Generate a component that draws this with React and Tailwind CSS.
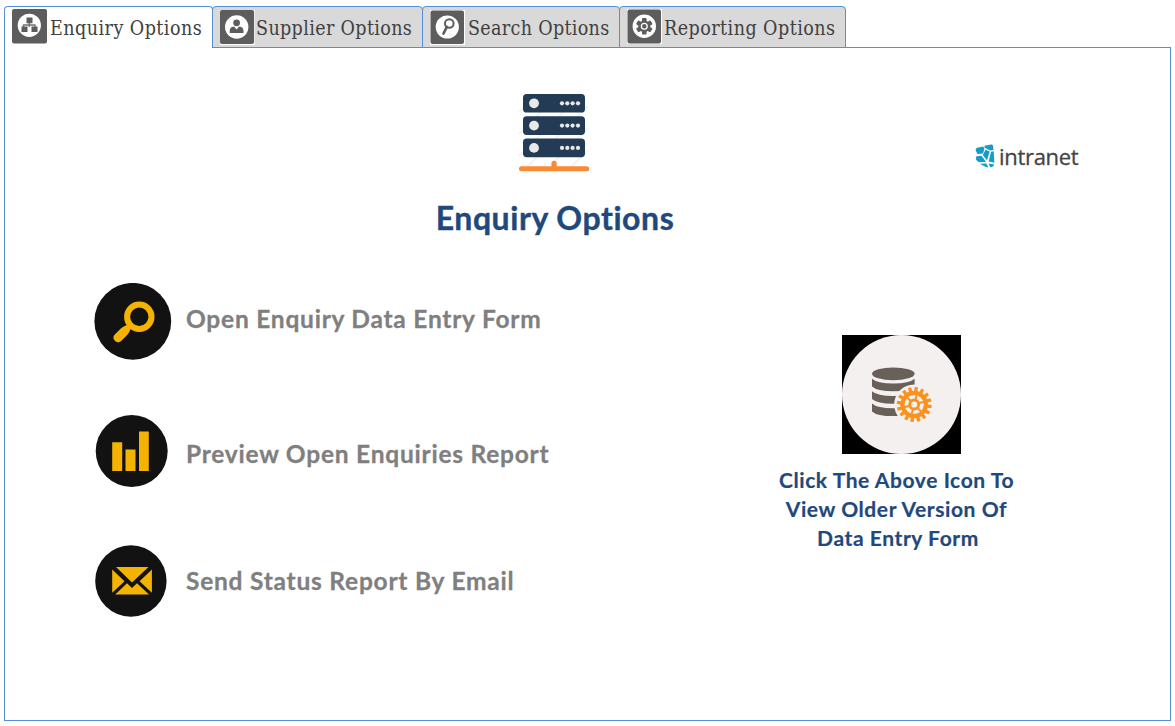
import React from 'react';

const OrgIcon = () => (
  <svg className="block h-[35px] w-[35px]" viewBox="0 0 35 35">
    <rect width="35" height="34.500" rx="2" fill="#5d5d5d" />
    <circle cx="17.300" cy="16.300" r="11.600" fill="#fff" />
    <path d="M17.300 13v5M11.500 20v-4h11.500v4" stroke="#707070" strokeWidth="1.300" fill="none" />
    <path d="M14.500 8.500h6v5.700h-6zM9.500 17.500h6v5.500h-6zM19.500 17.500h6v5.500h-6z" fill="#5d5d5d" />
  </svg>
);

const PersonIcon = () => (
  <svg className="block h-[35px] w-[35px]" viewBox="0 0 35 35">
    <rect width="34.500" height="35" fill="#fff" />
    <rect width="34" height="34" rx="2" fill="#5d5d5d" />
    <circle cx="16.700" cy="17" r="11.700" fill="#fff" />
    <circle cx="16.600" cy="12.800" r="3.400" fill="#5d5d5d" />
    <path d="M9.700 23v-2.200q.3-3.300 3-4l1.400-.4 2.500 3.200 2.500-3.200 1.400.4q2.700.7 3 4V23z" fill="#5d5d5d" />
  </svg>
);

const SearchIcon = () => (
  <svg className="block h-[35px] w-[35px]" viewBox="0 0 35 35">
    <rect width="35" height="35" fill="#fff" />
    <rect x=".5" y=".5" width="33.500" height="33.500" rx="2" fill="#5d5d5d" />
    <circle cx="17.300" cy="17" r="11.600" fill="#fff" />
    <circle cx="19.300" cy="13.500" r="4.300" fill="none" stroke="#5d5d5d" strokeWidth="2" />
    <path d="M16.800 17l-3.300 6.500" stroke="#5d5d5d" strokeWidth="2.700" strokeLinecap="round" />
  </svg>
);

const GearIcon = () => (
  <svg className="block h-[35px] w-[35px]" viewBox="0 0 35 35">
    <rect width="35" height="35" fill="#fff" />
    <rect x=".5" y=".5" width="33.500" height="34" rx="2" fill="#5d5d5d" />
    <circle cx="17.300" cy="17.300" r="11.700" fill="#fff" />
    {[0, 60, 120].map((a) => (
      <rect key={a} x="15" y="9" width="4.600" height="16.600" rx="1" fill="#5d5d5d" transform={`rotate(${a} 17.300 17.300)`} />
    ))}
    <circle cx="17.300" cy="17.300" r="5.900" fill="#5d5d5d" />
    <circle cx="17.300" cy="17.300" r="2.900" fill="none" stroke="#fff" strokeWidth="1.300" />
  </svg>
);

const ServerIcon = () => (
  <svg className="block h-[80px] w-[74px]" viewBox="518 93 74 80">
    <g stroke="#f3f3f3" strokeWidth="2">
      <path d="M519 112l18-18M519 134l40-40M519 156l62-62M524 170l64-64M546 170l42-42M568 170l20-20" />
    </g>
    {[94, 116.300, 138.600].map((y) => (
      <g key={y}>
        <rect x="523" y={y} width="62" height="18.600" rx="3.700" fill="#243b55" />
        <circle cx="534" cy={y + 9.300} r="4.900" fill="#e9e9e9" />
        {[562, 567.300, 572.600, 578].map((x) => (
          <circle key={x} cx={x} cy={y + 9.300} r="2.100" fill="#e9e9e9" />
        ))}
      </g>
    ))}
    <path d="M551.500 166.200v-2.700q0-2.700 2.600-2.700t2.600 2.700v2.700h30q2.500 0 2.500 2.500t-2.500 2.500h-65.200q-2.500 0-2.500-2.500t2.500-2.500z" fill="#fa8a35" />
  </svg>
);

const IntranetMark = () => (
  <svg className="block h-[25px] w-[21px]" viewBox="975 144 21 25">
    <path d="M984.500 145.800l6.500-1.300q2-.3 2.200 2l.3 3.500-3.500.6-5.500-3zM983 146.500l1.500 2-1.500 5-5.500.6-1.800-3.600q-.5-2 1.500-2.800zM976.500 156.300l5-.6 4.500 6-7 .6-2.800-2.400q-.7-1.500.3-3.600zM979.800 163.800l6.500-.4 2 3.600q-1.500.5-3-.3zM991 151.800l2.700-.6.700 11.600-5.700-1.200zM988.600 163.600l5.600 1q-.2 1.700-2 2.200l-2 .5z" fill="#159cc8" />
    <path d="M985.500 149.700l4.200 1.900-2.700 8.800-4.200-5.500z" fill="#159cc8" />
  </svg>
);

const MagnifierAction = () => (
  <svg className="block h-[78px] w-[78px]" viewBox="94 283 78 78">
    <circle cx="132.800" cy="321.300" r="38.400" fill="#121212" />
    <circle cx="139.300" cy="316.700" r="12.200" fill="none" stroke="#f5b301" strokeWidth="6" />
    <path d="M129.200 324.500l2 2q-1 5.800-5.300 9.800l-5 5q-3 2.200-5.800-.3-3-3-.8-6l5-5q4-4.500 9.900-5.500z" fill="#f5b301" />
  </svg>
);

const ChartAction = () => (
  <svg className="block h-[74px] w-[78px]" viewBox="94 414 78 74">
    <circle cx="131.700" cy="451.100" r="36" fill="#121212" />
    <path d="M112.200 442.200h10v28.800h-10zM125.500 449.500h10V471h-10zM139 431.500h9.800V471H139z" fill="#f5b301" />
  </svg>
);

const MailAction = () => (
  <svg className="block h-[74px] w-[78px]" viewBox="94 544 78 74">
    <circle cx="130.900" cy="581" r="35.700" fill="#121212" />
    <path d="M116 567h32.500l-16.500 15.500zM112.200 569.500l12.300 11.700-12.300 11.600zM151.900 569.500v23.300l-12.300-11.600zM127 583.300l5 4.700 5-4.700L149 594.500h-33.800z" fill="#f5b301" />
  </svg>
);

const DatabaseIcon = () => (
  <svg className="block h-[119px] w-[119px]" viewBox="842 335 119 119">
    <rect x="842" y="335" width="119" height="119" fill="#000" />
    <circle cx="901.500" cy="394.500" r="59.500" fill="#f4f0ef" />
    <ellipse cx="893.300" cy="373.800" rx="21.300" ry="6.400" fill="#696059" />
    {[378.800, 391.200, 403.600].map((y) => (
      <path key={y} d={`M872 ${y}q5 4.700 21.300 4.700t21.300-4.700v7.800q-5 4.700-21.300 4.700t-21.300-4.700z`} fill="#696059" />
    ))}
    <circle cx="914.200" cy="404.500" r="20" fill="#f4f0ef" />
    {Array.from({ length: 16 }, (_, i) => (
      <rect key={i} x="912.500" y="387" width="3.400" height="6" fill="#fb921f" transform={`rotate(${i * 22.5 + 7} 914.200 404.500)`} />
    ))}
    <circle cx="914.200" cy="404.500" r="11.700" fill="none" stroke="#fb921f" strokeWidth="4.200" />
    <circle cx="914.200" cy="404.500" r="4.500" fill="none" stroke="#fb921f" strokeWidth="2.800" />
    {[15, 75, 135, 195, 255, 315].map((a) => (
      <path key={a} d="M914.200 400v-6" stroke="#fb921f" strokeWidth="2" transform={`rotate(${a} 914.200 404.500)`} />
    ))}
  </svg>
);

const tabs = [
  { label: 'Enquiry Options', Icon: OrgIcon, box: 'w-[209px] bg-white pl-[7px] pt-[2px] h-[42px] border-b-0 z-10', text: 'ml-[3px] mt-[2px] tracking-[0.46px]' },
  { label: 'Supplier Options', Icon: PersonIcon, box: 'w-[211px] bg-[#d9d9d9] pl-[7px] pt-[3px] h-[42px] -ml-px', text: 'ml-[1px] mt-[1px] tracking-[0.36px]' },
  { label: 'Search Options', Icon: SearchIcon, box: 'w-[198px] bg-[#d9d9d9] pl-[7px] pt-[3px] h-[42px] -ml-px', text: 'ml-[3px] mt-[1px] tracking-[0.32px]' },
  { label: 'Reporting Options', Icon: GearIcon, box: 'w-[227px] bg-[#d9d9d9] pl-[7px] pt-[2px] h-[42px] -ml-px', text: 'ml-[2px] mt-[2px] tracking-[0.46px]' },
];

const actions = [
  { label: 'Open Enquiry Data Entry Form', Icon: MagnifierAction, row: '', text: '-mt-[6px] tracking-[0.77px]' },
  { label: 'Preview Open Enquiries Report', Icon: ChartAction, row: 'mt-[53px]', text: 'mt-[6px] tracking-[0.77px]' },
  { label: 'Send Status Report By Email', Icon: MailAction, row: 'mt-[56px]', text: 'tracking-[0.77px]' },
];

export default function App() {
  return (
    <div className="h-[726px] w-[1175px] overflow-hidden bg-white pl-1 pt-[6px] font-['Lato',sans-serif]">
      <nav className="flex">
        {tabs.map(({ label, Icon, box, text }) => (
          <button key={label} className={`relative flex shrink-0 items-start rounded-t-[4px] border border-[#5590d5] ${box}`}>
            <Icon />
            <span className={`whitespace-nowrap font-['DejaVu_Serif_Condensed','DejaVu_Serif',serif] text-[19.5px] leading-[35px] text-[#404040] [font-stretch:condensed] ${text}`}>
              {label}
            </span>
          </button>
        ))}
      </nav>
      <main className="-mt-px h-[674px] w-[1167px] border border-[#5590d5]">
        <header className="grid grid-cols-[400px_300px_1fr]">
          <div />
          <div className="flex flex-col items-center pt-[45px]">
            <ServerIcon />
            <h1 className="mt-[25px] -mb-px whitespace-nowrap text-[32px] leading-[40px] font-bold tracking-[0.55px] text-[#1f497d] [-webkit-text-stroke:0.4px_#1f497d]">Enquiry Options</h1>
          </div>
          <div className="flex items-start pl-[270px] pt-[96px]">
            <IntranetMark />
            <span className="ml-[3px] font-['Open_Sans',sans-serif] text-[22px] leading-[25px] tracking-[-0.3px] text-[#444] [-webkit-text-stroke:0.3px_#444]">intranet</span>
          </div>
        </header>
        <div className="flex">
          <section className="w-[728px] pl-[89px] pt-[46px]">
            {actions.map(({ label, Icon, row, text }) => (
              <div key={label} className={`flex items-center ${row}`}>
                <Icon />
                <span className={`ml-[14px] whitespace-nowrap text-[24.5px] leading-[32px] font-bold text-[#7f7f7f] [-webkit-text-stroke:0.3px_#7f7f7f] ${text}`}>{label}</span>
              </div>
            ))}
          </section>
          <aside className="flex w-[336px] flex-col items-center pt-[98px]">
            <DatabaseIcon />
            <p className="mt-[11px] whitespace-nowrap pr-[9px] text-center text-[21px] leading-[29px] font-bold tracking-[0.58px] text-[#1f497d] [-webkit-text-stroke:0.2px_#1f497d]">
              Click The Above Icon To
              <br />
              View Older Version Of
              <br />
              <span className="pl-[3px]">Data Entry Form</span>
            </p>
          </aside>
        </div>
      </main>
    </div>
  );
}
